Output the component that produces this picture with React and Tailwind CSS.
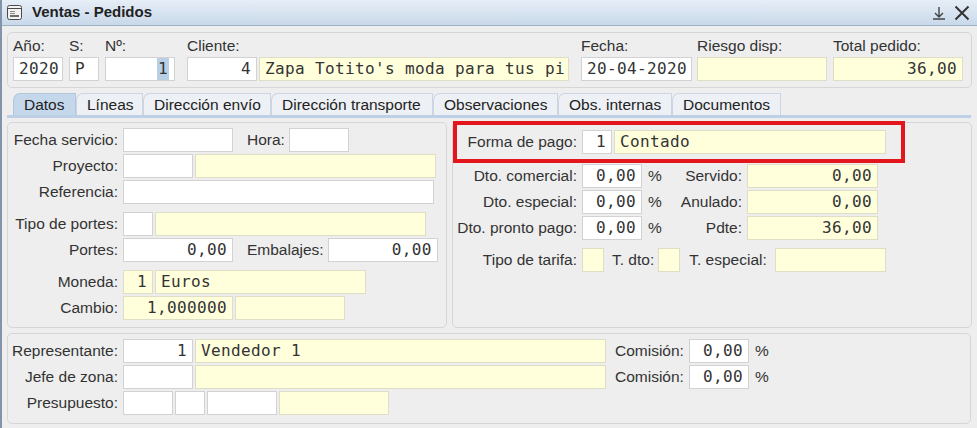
import React from "react";
import clsx from "clsx";

const F = ({ className = "", yellow, right, sel, children }) => (
  <div
    className={clsx(
      "h-6 shrink-0 border flex items-center px-[5px] font-['DejaVu_Sans_Mono',monospace] text-[16px] tracking-[0.37px] text-[#333] leading-none whitespace-nowrap overflow-hidden",
      yellow ? "bg-[#ffffdc] border-[#dedec6]" : "bg-white border-[#d2d2d2]",
      right && "justify-end",
      className
    )}
  >
    {sel ? <span className="bg-[#b8cfe6] px-[1px] py-[3px]">{children}</span> : children}
  </div>
);

const L = ({ className = "", children }) => (
  <span
    className={clsx(
      "shrink-0 whitespace-nowrap text-[15.5px] leading-none text-[#333] font-['Liberation_Sans',Arial,sans-serif]",
      className
    )}
  >
    {children}
  </span>
);

const Row = ({ className = "", children }) => (
  <div className={clsx("flex items-center h-6", className)}>{children}</div>
);

const Tab = ({ active, className = "", children }) => (
  <div
    className={clsx(
      "h-[22px] flex items-center px-[10px] border border-b-0 rounded-tl-[7px] text-[15.5px] text-[#222] font-['Liberation_Sans',Arial,sans-serif] whitespace-nowrap",
      active ? "bg-[#c5d7eb] border-[#b3c7dc]" : "bg-[#edf0f4] border-[#cbd6e2]",
      className
    )}
  >
    {children}
  </div>
);

const Panel = ({ className = "", children }) => (
  <div className={clsx("border border-[#d6d6d6] rounded-[5px] bg-[#eeeeee]", className)}>
    {children}
  </div>
);

export default function App() {
  return (
    <div className="w-[977px] h-[428px] bg-[#eeeeee] border-l-2 border-[#8394aa] overflow-hidden font-['Liberation_Sans',Arial,sans-serif]">
      {/* title bar */}
      <div className="h-[26px] flex items-center bg-gradient-to-b from-[#e6eef7] to-[#c9d9ea] border-b border-[#9cb0c6]">
        <svg width="15" height="15" viewBox="0 0 15 15" className="ml-[5px]">
          <rect x="0.5" y="0.5" width="14" height="14" rx="2" fill="#f2f2f2" stroke="#4a4a4a" />
          <line x1="1" y1="3.5" x2="14" y2="3.5" stroke="#4a4a4a" />
          <line x1="3" y1="6.5" x2="8" y2="6.5" stroke="#8a8a8a" />
          <line x1="3" y1="8.5" x2="8" y2="8.5" stroke="#8a8a8a" />
          <line x1="3" y1="11" x2="12" y2="11" stroke="#4a4a4a" strokeWidth="1.6" />
        </svg>
        <span className="ml-[10px] text-[15px] font-bold text-[#222]">Ventas - Pedidos</span>
        <div className="ml-auto flex items-center gap-[8px] mr-[7px]">
          <svg width="14" height="14" viewBox="0 0 14 14">
            <path d="M7 1V11M3 7L7 11L11 7M1 13H13" fill="none" stroke="#444" strokeWidth="1.4" />
          </svg>
          <svg width="16" height="16" viewBox="0 0 16 16">
            <path d="M1.5 1.5L14.5 14.5M14.5 1.5L1.5 14.5" fill="none" stroke="#333" strokeWidth="2" />
          </svg>
        </div>
      </div>

      {/* header */}
      <Panel className="ml-[5px] mr-[5px] mt-[6px] h-[56px] pl-[5px] pt-[5px] flex">
        <div className="flex flex-col">
          <L className="h-[19px]">Año:</L>
          <F className="w-[50px]">2020</F>
        </div>
        <div className="flex flex-col ml-[6px]">
          <L className="h-[19px]">S:</L>
          <F className="w-[30px]">P</F>
        </div>
        <div className="flex flex-col ml-[6px]">
          <L className="h-[19px]">Nº:</L>
          <F className="w-[70px]" right sel>1</F>
        </div>
        <div className="flex flex-col ml-[12px]">
          <L className="h-[19px]">Cliente:</L>
          <div className="flex gap-[2px]">
            <F className="w-[70px]" right>4</F>
            <F className="w-[310px]" yellow>Zapa Totito's moda para tus pi</F>
          </div>
        </div>
        <div className="flex flex-col ml-[12px]">
          <L className="h-[19px]">Fecha:</L>
          <F className="w-[111px]">20-04-2020</F>
        </div>
        <div className="flex flex-col ml-[5px]">
          <L className="h-[19px]">Riesgo disp:</L>
          <F className="w-[130px]" yellow></F>
        </div>
        <div className="flex flex-col ml-[6px]">
          <L className="h-[19px]">Total pedido:</L>
          <F className="w-[130px]" yellow right>36,00</F>
        </div>
      </Panel>

      {/* tabs */}
      <div className="flex ml-[11px] mt-[5px]">
        <Tab active className="w-[63px]">Datos</Tab>
        <Tab className="w-[67px]">Líneas</Tab>
        <Tab className="w-[128px]">Dirección envío</Tab>
        <Tab className="w-[162px]">Dirección transporte</Tab>
        <Tab className="w-[125px]">Observaciones</Tab>
        <Tab className="w-[114px]">Obs. internas</Tab>
        <Tab className="w-[109px]">Documentos</Tab>
      </div>
      <div className="h-[3px] bg-[#bdd0e5] ml-[5px] mr-[6px]" />

      {/* middle panels */}
      <div className="flex gap-[5px] ml-[5px] mr-[5px] mt-[4px] h-[206px]">
        <Panel className="w-[440px] pt-[5px] flex flex-col">
          <Row>
            <L className="w-[110px] text-right">Fecha servicio:</L>
            <F className="w-[110px] ml-[5px]"></F>
            <L className="ml-[14px]">Hora:</L>
            <F className="w-[60px] ml-[4px]"></F>
          </Row>
          <Row className="mt-[2px]">
            <L className="w-[110px] text-right">Proyecto:</L>
            <F className="w-[70px] ml-[5px]"></F>
            <F className="w-[241px] ml-[2px]" yellow></F>
          </Row>
          <Row className="mt-[2px]">
            <L className="w-[110px] text-right">Referencia:</L>
            <F className="w-[311px] ml-[5px]"></F>
          </Row>
          <Row className="mt-[8px]">
            <L className="w-[110px] text-right">Tipo de portes:</L>
            <F className="w-[30px] ml-[5px]"></F>
            <F className="w-[271px] ml-[2px]" yellow></F>
          </Row>
          <Row className="mt-[2px]">
            <L className="w-[110px] text-right">Portes:</L>
            <F className="w-[110px] ml-[5px]" right>0,00</F>
            <L className="ml-[14px]">Embalajes:</L>
            <F className="w-[110px] ml-[4px]" right>0,00</F>
          </Row>
          <Row className="mt-[8px]">
            <L className="w-[110px] text-right">Moneda:</L>
            <F className="w-[30px] ml-[5px]" yellow right>1</F>
            <F className="w-[211px] ml-[2px]" yellow>Euros</F>
          </Row>
          <Row className="mt-[2px]">
            <L className="w-[110px] text-right">Cambio:</L>
            <F className="w-[110px] ml-[5px]" yellow right>1,000000</F>
            <F className="w-[110px] ml-[2px]" yellow></F>
          </Row>
        </Panel>

        <Panel className="flex-1 relative pt-[7px] flex flex-col">
          <Row>
            <L className="w-[124px] text-right">Forma de pago:</L>
            <F className="w-[30px] ml-[5px]" right>1</F>
            <F className="w-[272px] ml-[2px]" yellow>Contado</F>
          </Row>
          <Row className="mt-[10px]">
            <L className="w-[124px] text-right">Dto. comercial:</L>
            <F className="w-[60px] ml-[5px]" right>0,00</F>
            <L className="w-[20px] ml-[6px]">%</L>
            <L className="w-[74px] text-right">Servido:</L>
            <F className="w-[131px] ml-[5px]" yellow right>0,00</F>
          </Row>
          <Row className="mt-[2px]">
            <L className="w-[124px] text-right">Dto. especial:</L>
            <F className="w-[60px] ml-[5px]" right>0,00</F>
            <L className="w-[20px] ml-[6px]">%</L>
            <L className="w-[74px] text-right">Anulado:</L>
            <F className="w-[131px] ml-[5px]" yellow right>0,00</F>
          </Row>
          <Row className="mt-[2px]">
            <L className="w-[124px] text-right">Dto. pronto pago:</L>
            <F className="w-[60px] ml-[5px]" right>0,00</F>
            <L className="w-[20px] ml-[6px]">%</L>
            <L className="w-[74px] text-right">Pdte:</L>
            <F className="w-[131px] ml-[5px]" yellow right>36,00</F>
          </Row>
          <Row className="mt-[8px]">
            <L className="w-[124px] text-right">Tipo de tarifa:</L>
            <F className="w-[22px] ml-[5px]" yellow></F>
            <L className="ml-[8px]">T. dto:</L>
            <F className="w-[22px] ml-[4px]" yellow></F>
            <L className="ml-[9px]">T. especial:</L>
            <F className="w-[111px] ml-[8px]" yellow></F>
          </Row>
          <div className="absolute left-0 top-[-2px] w-[452px] h-[42px] border-4 border-[#e3161e]" />
        </Panel>
      </div>

      {/* bottom panel */}
      <Panel className="ml-[5px] mr-[6px] mt-[5px] h-[91px] pt-[5px] flex flex-col">
        <Row>
          <L className="w-[110px] text-right">Representante:</L>
          <F className="w-[70px] ml-[5px]" right>1</F>
          <F className="w-[411px] ml-[2px]" yellow>Vendedor 1</F>
          <L className="ml-[9px]">Comisión:</L>
          <F className="w-[60px] ml-[5px]" right>0,00</F>
          <L className="ml-[6px]">%</L>
        </Row>
        <Row className="mt-[2px]">
          <L className="w-[110px] text-right">Jefe de zona:</L>
          <F className="w-[70px] ml-[5px]"></F>
          <F className="w-[411px] ml-[2px]" yellow></F>
          <L className="ml-[9px]">Comisión:</L>
          <F className="w-[60px] ml-[5px]" right>0,00</F>
          <L className="ml-[6px]">%</L>
        </Row>
        <Row className="mt-[2px]">
          <L className="w-[110px] text-right">Presupuesto:</L>
          <F className="w-[50px] ml-[5px]"></F>
          <F className="w-[30px] ml-[2px]"></F>
          <F className="w-[70px] ml-[2px]"></F>
          <F className="w-[110px] ml-[2px]" yellow></F>
        </Row>
      </Panel>
    </div>
  );
}
